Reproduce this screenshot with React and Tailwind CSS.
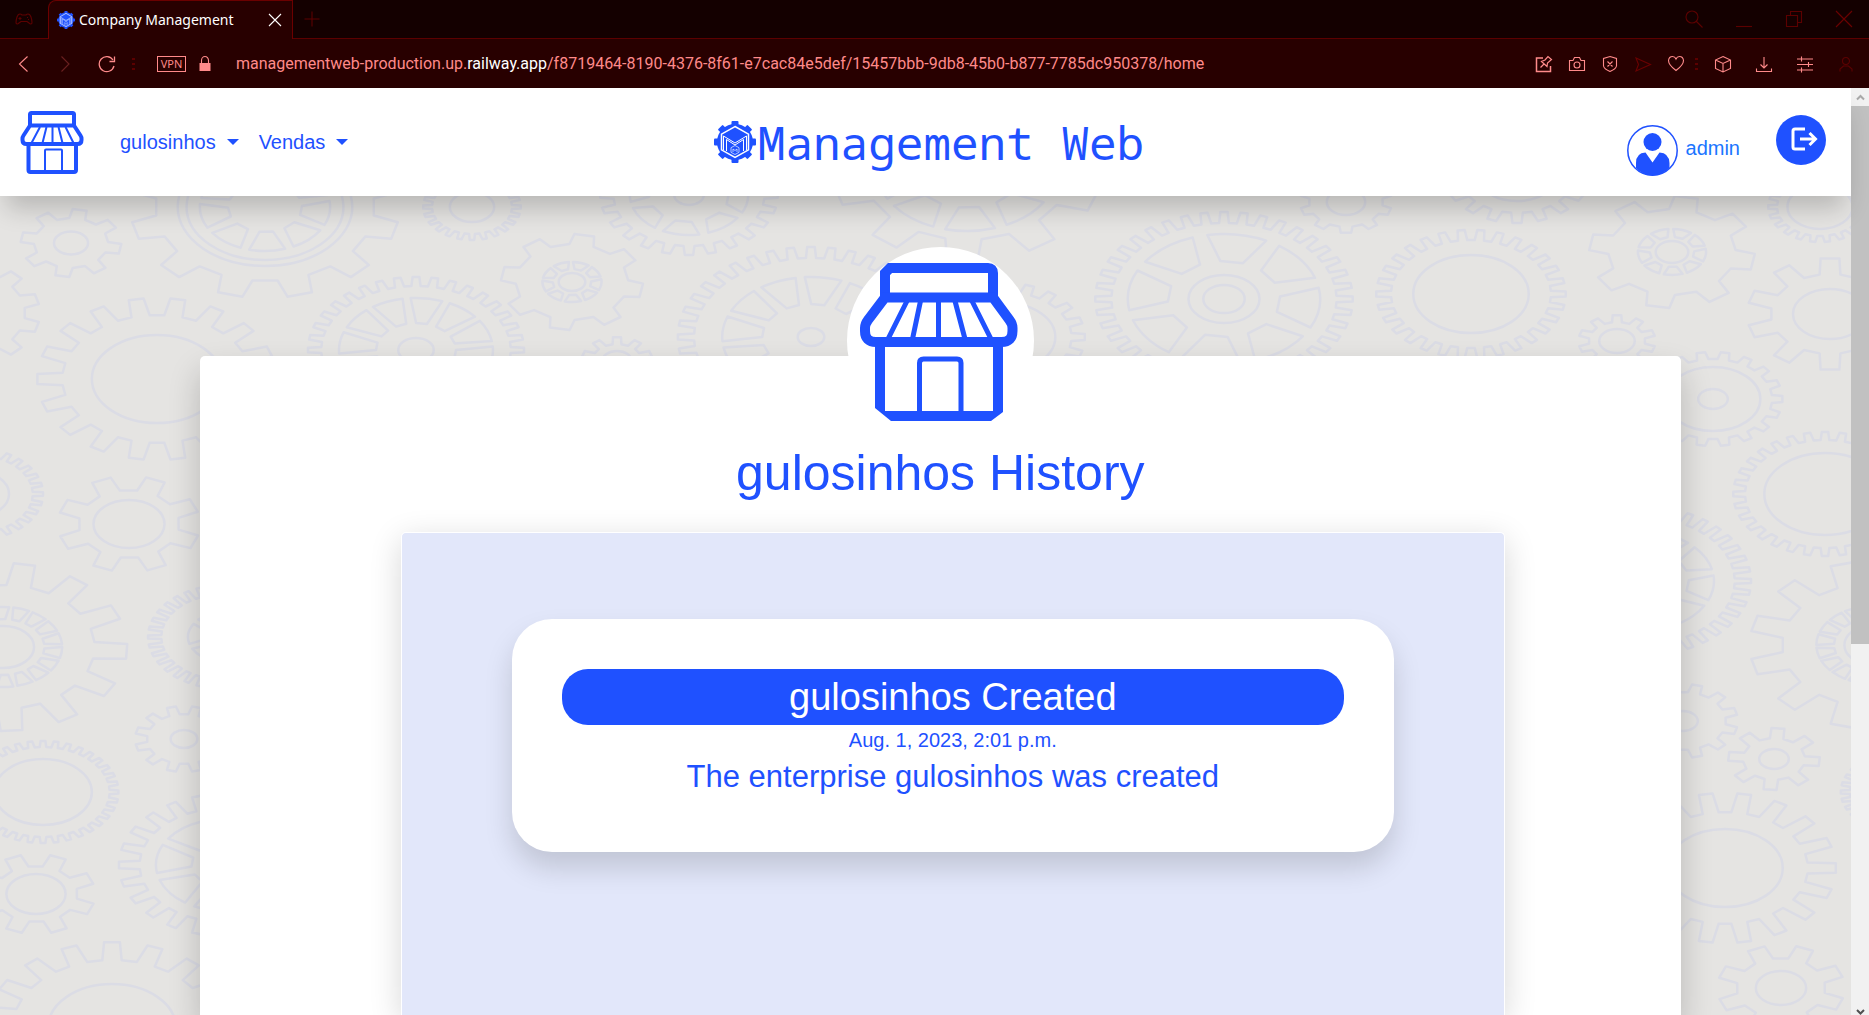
const BLUE = '#1f51ff';
const KX = 1.48;

/* cx, cy, outer radius, root radius, teeth, start angle, circles, [window inner, window outer, window count] */
const GEARS = [
  [71, 243, 34, 25, 8, 10, [11.5]],
  [265, 207, 91, 74, 12, 75, [59, 53], [25, 44, 9]],
  [472, 207, 33, 27, 24, 0, [15]],
  [689, 195, 60, 51, 24, 0, [10], [27, 40, 8]],
  [572, 282, 48, 38, 8, 10, [9], [13, 20, 9]],
  [416, 350, 73, 64, 36, 0, [12], [27, 52, 12]],
  [811, 337, 90, 79, 40, 0, [9], [33, 60, 12]],
  [617, 361, 24, 17, 10, 18, [10]],
  [-40, 313, 54, 44, 12, 15, []],
  [157, 379, 81, 64, 18, 0, [44]],
  [-25, 494, 46, 39, 30, 0, [23]],
  [129, 524, 48, 34, 8, 22, [24]],
  [3, 647, 84, 62, 13, 3, [21], [28, 40, 18]],
  [225, 637, 52, 43, 36, 0, [9], [12, 25, 6]],
  [184, 739, 33, 25, 12, 15, [9]],
  [43, 792, 51, 45, 36, 0, [33]],
  [36, 894, 40, 28, 8, 22, [20]],
  [224, 865, 71, 57, 24, 0, [12], [22, 46, 8]],
  [112, 1027, 85, 67, 18, 10, [43]],
  [1224, 299, 87, 76, 40, 0, [24, 14], [38, 65, 8]],
  [1471, 294, 64, 54, 30, 0, [39]],
  [1672, 252, 56, 43, 8, 10, [11], [15, 23, 9]],
  [1346, 202, 31, 25, 10, 18, [13]],
  [1517, 173, 50, 40, 18, 10, [28]],
  [1820, 207, 35, 29, 22, 0, [22]],
  [1830, 314, 56, 40, 10, 18, [25]],
  [1617, 341, 26, 19, 10, 18, [12]],
  [1713, 399, 47, 40, 18, 0, [32, 10]],
  [1825, 494, 62, 54, 32, 0, [41]],
  [1640, 581, 75, 64, 40, 0, [12], [33, 50, 10]],
  [1874, 645, 84, 62, 12, 15, [20], [27, 39, 18]],
  [1683, 721, 37, 29, 12, 15, [10]],
  [1774, 759, 31, 21, 8, 5, [10]],
  [1725, 868, 75, 56, 18, 0, [39]],
  [1781, 988, 43, 30, 8, 22, [17]],
  [1900, 792, 40, 34, 30, 0, [20]],
  [1005, 337, 54, 45, 20, 0, [34]],
  [967, 170, 91, 70, 10, 20, [14], [38, 61, 9]],
];

const pt = (cx, cy, r, deg) => {
  const a = (deg * Math.PI) / 180;
  return (cx + r * KX * Math.cos(a)).toFixed(1) + ' ' + (cy + r * Math.sin(a)).toFixed(1);
};

function gearPath([cx, cy, R, r, n, start, circles, win]) {
  const step = 360 / n;
  const points = [];
  for (let i = 0; i < n; i++) {
    const a = start + i * step;
    points.push(
      pt(cx, cy, r, a - step * 0.28),
      pt(cx, cy, R, a - step * 0.18),
      pt(cx, cy, R, a + step * 0.18),
      pt(cx, cy, r, a + step * 0.28),
    );
  }
  let d = 'M' + points.join('L') + 'Z';
  circles.forEach((c) => {
    const rx = c * KX;
    d += `M${cx - rx} ${cy}a${rx} ${c} 0 1 0 ${rx * 2} 0a${rx} ${c} 0 1 0 ${-rx * 2} 0Z`;
  });
  if (win) {
    const [a, b, m] = win;
    const w = 360 / m;
    for (let i = 0; i < m; i++) {
      const t = i * w + 8;
      d += `M${pt(cx, cy, a, t - w * 0.26)}L${pt(cx, cy, b, t - w * 0.4)}A${b * KX} ${b} 0 0 1 ${pt(cx, cy, b, t + w * 0.4)}L${pt(cx, cy, a, t + w * 0.26)}Z`;
    }
  }
  return d;
}

function GearPattern() {
  return (
    <svg className="absolute inset-0 h-full w-full" viewBox="0 196 1851 819" preserveAspectRatio="xMidYMin slice" aria-hidden="true">
      <g fill="none" stroke="#dbdce5" strokeWidth="2.500" strokeLinejoin="round">
        {GEARS.map((g, i) => (
          <path key={i} d={gearPath(g)} />
        ))}
      </g>
    </svg>
  );
}

function StoreSmall() {
  return (
    <svg className="h-16 w-16" viewBox="0 0 64 64" fill="none" stroke={BLUE} strokeWidth="4" strokeLinejoin="round" aria-hidden="true">
      <path d="M10 15V4.500q0-1.500 1.500-1.500H52.500q1.500 0 1.500 1.500V15" />
      <path d="M10 15.500H54L60.500 25.500q1 1.500 1 3V30q0 4-4 4H6.500q-4 0-4-4V28.500q0-1.500 1-3Z" />
      <path d="M8.500 32.500V60q0 2 2 2H54q2 0 2-2V32.500" />
      <path d="M25 60V40.500q0-1 1-1H41q1 0 1 1V60" strokeWidth="2" />
      <path d="M20 17L11.500 33M26.500 17L22.500 33M32.500 17V33M38.500 17L42.500 33M45.500 17L53.500 33" strokeWidth="2" />
    </svg>
  );
}

function StoreLarge() {
  return (
    <svg className="h-[187px] w-[187px]" viewBox="0 0 187 187" aria-hidden="true">
      <circle cx="93.500" cy="93.500" r="93.500" fill="#fff" />
      <g fill="none" stroke={BLUE} strokeWidth="10">
        <path d="M38 52V26L43 21H141q5 0 5 5V52" />
        <path d="M38 50.500H146L162.500 73q3 4 3 8V84q0 11-11 11H29q-11 0-11-11V81q0-4 3-8Z" />
        <path d="M33 95V161M151 95V164" />
        <path d="M72.500 166V116q0-4 4-4H110q4 0 4 4V166" strokeWidth="5" />
        <path d="M60 54L41 92M73.500 54L65.500 92M91.500 54V92M108 54L118 92M125 54L144 92" strokeWidth="5" />
      </g>
      <path d="M28 160H38V164H146V160H156V165L144 174H44L28 161Z" fill={BLUE} />
    </svg>
  );
}

function BrandMark({ className }) {
  const teeth = [0, 45, 90, 135, 180, 225, 270, 315];
  return (
    <svg className={className} viewBox="0 0 42 42" aria-hidden="true">
      <circle cx="21" cy="21" r="18" fill={BLUE} />
      {teeth.map((a) => (
        <rect key={a} x="17.500" y="0" width="7" height="8" rx="1" fill={BLUE} transform={`rotate(${a} 21 21)`} />
      ))}
      <path d="M21 5.500L34.500 13.200V28.800L21 36.500L7.500 28.800V13.200Z" fill="none" stroke="#fff" strokeWidth="1.500" />
      <path d="M9.500 29V15L21 22L32.500 15V29M12.500 30V18.500L21 24L29.500 18.500V30" fill="none" stroke="#fff" strokeWidth="1" />
      <path d="M21 24.500L25 26.700V31.300L21 33.500L17 31.300V26.700ZM19 31V28L21 29.500L23 28V31" fill="none" stroke="#dbe4ff" strokeWidth=".8" />
    </svg>
  );
}

function Icon({ children, className = 'text-[#ff8a8a]', size = 'h-[18px] w-[18px]' }) {
  return (
    <svg className={`${size} ${className} shrink-0`} viewBox="0 0 18 18" fill="none" stroke="currentColor" strokeWidth="1.100" aria-hidden="true">
      {children}
    </svg>
  );
}

function Dots() {
  return (
    <span className="flex w-[3px] flex-col gap-[3px]" aria-hidden="true">
      <i className="h-[2px] bg-[#5c0000]" />
      <i className="h-[2px] bg-[#5c0000]" />
      <i className="h-[2px] bg-[#5c0000]" />
    </span>
  );
}

function TabBar() {
  return (
    <div className="flex h-[39px] bg-[#140000] font-['Noto_Sans',sans-serif]">
      <div className="flex w-12 items-center justify-center border-b border-[#5c0000]">
        <Icon className="text-[#5c0000]">
          <path d="M5 4Q3 4 2 7T1 13Q2 15 4 13L6 11.500H12L14 13Q16 15 17 13Q17 10 16 7T13 4Q12 4 11 5H7Q6 4 5 4ZM5 7v3M3.500 8.500h3M12 7.500h1M13 9.500h1" />
        </Icon>
      </div>
      <div className="flex w-[245px] items-center rounded-tl-lg border-x border-t border-[#6b0000] bg-[#280000] px-2 pb-px">
        <BrandMark className="h-[18px] w-[18px] shrink-0" />
        <span className="ml-1 flex-1 whitespace-nowrap text-[14px] text-white">Company Management</span>
        <button aria-label="Close tab">
          <Icon className="text-white">
            <path d="M3 3L15 15M15 3L3 15" />
          </Icon>
        </button>
      </div>
      <div className="flex flex-1 items-center justify-between border-b border-[#5c0000] pl-[10px] pr-4">
        <button aria-label="New tab">
          <Icon className="text-[#5c0000]">
            <path d="M9 1.500V16.500M1.500 9H16.500" />
          </Icon>
        </button>
        <div className="flex items-center gap-8">
          <button aria-label="Search tabs">
            <Icon className="text-[#5c0000]"><path d="M13 7a6 6 0 1 1-12 0a6 6 0 1 1 12 0ZM11.500 11.500L17.500 17.500" /></Icon>
          </button>
          <button aria-label="Minimize">
            <Icon className="text-[#5c0000]"><path d="M1 16.500H17" /></Icon>
          </button>
          <button aria-label="Restore">
            <Icon className="text-[#5c0000]"><path d="M1.500 5.500h11v11h-11ZM5.500 5.500v-4h11v11h-4" /></Icon>
          </button>
          <button aria-label="Close window">
            <Icon className="text-[#6b0000]"><path d="M1 1L17 17M17 1L1 17" /></Icon>
          </button>
        </div>
      </div>
    </div>
  );
}

function AddressBar() {
  return (
    <div className="flex h-[49px] items-center bg-[#280000] pl-[15px] pr-[14px] text-[#ff8a8a]">
      <button aria-label="Back"><Icon><path d="M12.500 1.500L4.500 9L12.500 16.500" /></Icon></button>
      <button aria-label="Forward" className="ml-6"><Icon className="text-[#6b2020]"><path d="M4.500 1.500L12 9L4.500 16.500" /></Icon></button>
      <button aria-label="Reload" className="ml-[23px]">
        <Icon><path d="M15 5A7.500 7.500 0 1 0 16 11M16.500 1.500V6.500H11.500" strokeWidth="1.300" /></Icon>
      </button>
      <div className="ml-4"><Dots /></div>
      <button className="ml-[22px] flex h-4 w-[29px] items-center justify-center border border-[#ff8a8a] font-['Noto_Sans',sans-serif] text-[11px] leading-none">VPN</button>
      <button aria-label="Site information" className="ml-[10px]">
        <Icon><path d="M3.500 8h11v8h-11Z" fill="currentColor" stroke="none" /><path d="M5.500 8V5.500a3.500 4 0 0 1 7 0V8" /></Icon>
      </button>
      <p className="ml-[22px] flex-1 whitespace-nowrap font-['Roboto',sans-serif] text-[16px]">
        managementweb-production.up.<span className="text-white">railway.app</span>/f8719464-8190-4376-8f61-e7cac84e5def/15457bbb-9db8-45b0-b877-7785dc950378/home
      </p>
      <div className="flex items-center gap-[15px]">
        <button aria-label="Pin page">
          <Icon><path d="M8 3H1.500V16.500H15.500V11" strokeWidth="1.500" /><path d="M5.500 12.500L9 9M6.500 6.500L12 11.500L12.500 8L16.500 4.500L13 1.500L10 5Z" strokeWidth="1.200" /></Icon>
        </button>
        <button aria-label="Snapshot">
          <Icon><path d="M1.500 5.500H5L6.500 2.500H11.500L13 5.500H16.500V15.500H1.500ZM12 10a3 3 0 1 1-6 0a3 3 0 1 1 6 0Z" /></Icon>
        </button>
        <button aria-label="Ad blocker">
          <Icon><path d="M9 1.500L15.500 3.500V11Q15 14 9 16.500Q3 14 2.500 11V3.500ZM6.500 6.500L11.500 11.500M11.500 6.500L6.500 11.500" /></Icon>
        </button>
        <button aria-label="Send to device"><Icon className="text-[#6b0000]"><path d="M2 3L16.500 9.500L2 16L4.500 9.500Z" /></Icon></button>
        <button aria-label="Bookmark">
          <Icon><path d="M9 15.500Q1.500 10 1.500 5.500Q2 1.500 5.500 1.500Q8 1.500 9 4Q10 1.500 12.500 1.500Q16 1.500 16.500 5.500Q16.500 10 9 15.500Z" /></Icon>
        </button>
      </div>
      <div className="ml-[10px]"><Dots /></div>
      <div className="ml-[16px] flex items-center gap-[23px]">
        <button aria-label="Wallet">
          <Icon><path d="M9 1.500L16.500 5V13.500L9 17L1.500 13.500V5ZM1.500 5L9 8.500L16.500 5M9 8.500V17" /></Icon>
        </button>
        <button aria-label="Downloads">
          <Icon><path d="M9 2V12.500M5.500 9.500L9 13L12.500 9.500M1.500 13.500V16.500H16.500V13.500" /></Icon>
        </button>
        <button aria-label="Easy setup">
          <Icon><path d="M1 4H17M1 9.500H17M1 15H17M5.500 1.500V6.500M12.500 7V12M5.500 12.500V17.500" /></Icon>
        </button>
        <button aria-label="Profile">
          <Icon className="text-[#5c0000]"><path d="M12.500 6a3.500 3.500 0 1 1-7 0a3.500 3.500 0 1 1 7 0ZM3 16.500V14L6.500 11H11.500L15 14V16.500" /></Icon>
        </button>
      </div>
    </div>
  );
}

function MenuLink({ children }) {
  return (
    <button className="flex items-center gap-[11px] text-[20px] leading-[30px] text-[#1f51ff]">
      {children}
      <i className="border-x-[6px] border-t-[6px] border-x-transparent border-t-[#1f51ff]" aria-hidden="true" />
    </button>
  );
}

function Header() {
  return (
    <header className="relative z-10 grid h-[108px] grid-cols-[1fr_auto_1fr] items-center bg-white pl-5 pr-[25px] shadow-[0_18px_24px_-6px_rgba(0,0,0,0.2)]">
      <div className="flex items-center">
        <a href="#home" aria-label="Store home"><StoreSmall /></a>
        <nav className="ml-9 flex gap-5">
          <MenuLink>gulosinhos</MenuLink>
          <MenuLink>Vendas</MenuLink>
        </nav>
      </div>
      <a href="#top" className="flex items-center gap-[2px] pl-3 text-[#1f51ff]">
        <BrandMark className="h-[42px] w-[42px]" />
        <span className="whitespace-nowrap font-['Noto_Sans_Mono','DejaVu_Sans_Mono',monospace] text-[46px] leading-[60px]">Management Web</span>
      </a>
      <div className="flex items-center justify-end">
        <a href="#admin" className="mt-4 flex items-center gap-2 text-[20px] text-[#1a75ff]">
          <svg className="h-[51px] w-[51px]" viewBox="0 0 51 51" aria-hidden="true">
            <circle cx="25.500" cy="25.500" r="24.700" fill="#fff" stroke={BLUE} strokeWidth="1.500" />
            <circle cx="25.500" cy="17" r="9" fill={BLUE} />
            <path d="M9 43V38Q9 28 18.500 27.500L25.500 37.500L32.500 27.500Q42 28 42.500 38V43Q35 50.500 25.500 50.500T9 43Z" fill={BLUE} />
          </svg>
          <span className="pb-1">admin</span>
        </a>
        <button aria-label="Log out" className="mb-1 ml-9 rounded-full bg-[#1f51ff]">
          <svg className="h-[50px] w-[50px]" viewBox="0 0 50 50" fill="none" stroke="#fff" strokeWidth="3" aria-hidden="true">
            <path d="M29 14H19Q17 14 17 16V32Q17 34 19 34H29M24 24H40M33.500 18L39.500 24L33.500 30" />
          </svg>
        </button>
      </div>
    </header>
  );
}

function History() {
  return (
    <main className="relative ml-[10.8%] mt-[51px] flex w-4/5 flex-1 flex-col items-center">
      <div className="relative z-10"><StoreLarge /></div>
      <section className="-mt-[78px] flex w-full flex-1 flex-col items-center rounded-t-[5px] bg-white pt-[84px] shadow-[0_16px_32px_rgba(0,0,0,0.2)]">
        <h1 className="text-[50px] leading-[66px] text-[#1f51ff]">gulosinhos History</h1>
        <div className="ml-[25px] mt-[26px] flex w-[1104px] max-w-full flex-1 flex-col items-center rounded-t-[5px] border border-b-0 border-white bg-[#e2e7fa] pt-[86px] shadow-[0_8px_32px_rgba(0,0,0,0.16)]">
          <article className="w-4/5 rounded-[40px] bg-white px-[50px] pb-[53px] pt-[50px] text-center text-[#1f51ff] shadow-[0_16px_28px_rgba(0,0,0,0.15)]">
            <h2 className="rounded-[26px] bg-[#1f51ff] text-[38px] leading-[56px] text-white">gulosinhos Created</h2>
            <time className="block text-[20px] leading-[30px]">Aug. 1, 2023, 2:01 p.m.</time>
            <p className="text-[31px] leading-[44px]">The enterprise gulosinhos was created</p>
          </article>
        </div>
      </section>
    </main>
  );
}

function Scrollbar() {
  return (
    <div className="flex w-[18px] shrink-0 flex-col bg-[#f1f1f1]" aria-hidden="true">
      <svg className="h-[18px] w-[18px]" viewBox="0 0 18 18" fill="none" stroke="#a8a8a8" strokeWidth="2"><path d="M6 11.500L9.500 8L13 11.500" /></svg>
      <div className="h-[538px] bg-[#c1c1c1]" />
      <svg className="mb-[-6px] mt-auto h-[18px] w-[18px]" viewBox="0 0 18 18" fill="none" stroke="#505050" strokeWidth="2"><path d="M6 7L9.500 10.500L13 7" /></svg>
    </div>
  );
}

export default function App() {
  return (
    <div className="flex h-screen flex-col overflow-hidden font-['Liberation_Sans',Arial,sans-serif]">
      <TabBar />
      <AddressBar />
      <div className="flex min-h-0 flex-1">
        <div className="flex min-w-0 flex-1 flex-col">
          <Header />
          <div className="relative flex min-h-0 flex-1 flex-col overflow-hidden bg-[#e5e4e2]">
            <GearPattern />
            <History />
          </div>
        </div>
        <Scrollbar />
      </div>
    </div>
  );
}
